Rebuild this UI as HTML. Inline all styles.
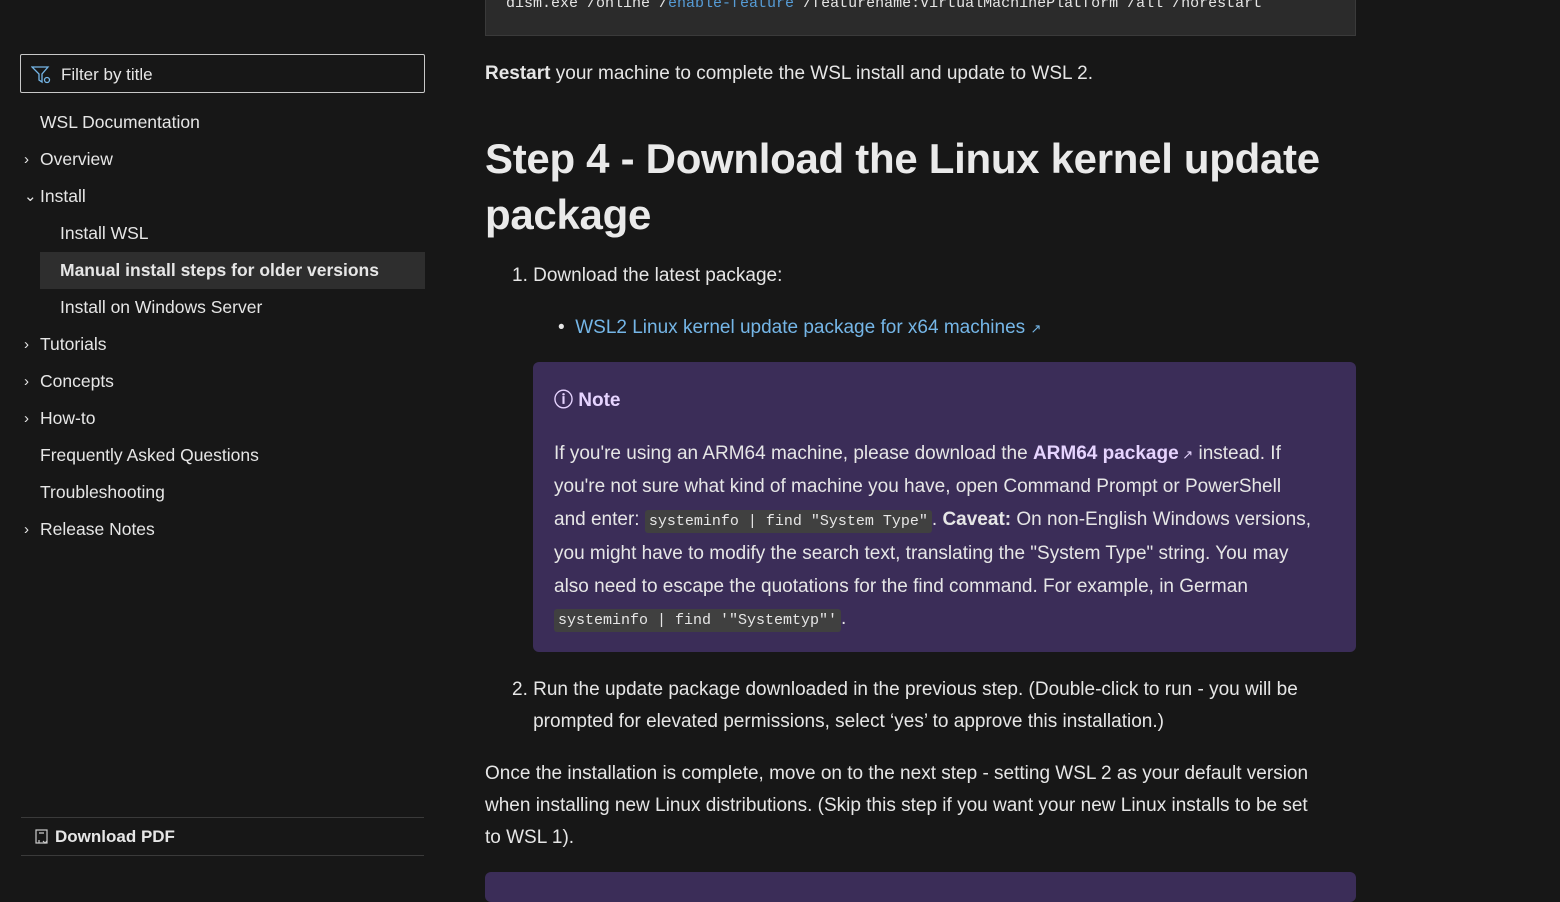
<!DOCTYPE html>
<html><head><meta charset="utf-8"><style>
*{box-sizing:border-box;margin:0;padding:0}
body{width:1560px;height:884px;overflow:hidden;background:#171717;color:#e6e6e6;font-family:"Liberation Sans",sans-serif;position:relative}
.filter{position:absolute;left:20px;top:54px;width:405px;height:39px;border:1px solid #c8c8c8;border-radius:2px;font-size:17px;color:#e6e6e6;padding:10px 0 0 40px}
.filter svg{position:absolute;left:10px;top:10px}
.nav{position:absolute;left:20px;top:104px;width:405px;font-size:17.5px}
.nav div{height:37px;line-height:37px;padding-left:20px;position:relative;white-space:nowrap}
.nav div.sub{padding-left:40px}
.nav div.act{background:#2e2e2e;font-weight:bold;margin-left:20px;padding-left:20px}
.nav .chev{position:absolute;left:4px;top:0;font-size:15px}
.pdf{position:absolute;left:21px;top:817px;width:403px;height:39px;border-top:1px solid #3a3a3a;border-bottom:1px solid #3a3a3a;font-size:17px;font-weight:bold;padding:9px 0 0 34px}
.code{position:absolute;left:485px;top:-18px;width:871px;height:54px;background:#2b2b2b;border:1px solid #3a3a3a;font-family:"Liberation Mono",monospace;font-size:15px;color:#e6e6e6;padding:12px 20px}
.p{position:absolute;left:485px;font-size:19px;line-height:32px;white-space:nowrap}
h1{position:absolute;left:485px;top:131px;font-size:42px;line-height:56px;font-weight:bold;color:#eaeaea;letter-spacing:-0.3px}
a{color:#75b6e7;text-decoration:none}
.note{position:absolute;left:533px;top:362px;width:823px;height:290px;background:#3b2d58;border-radius:6px;padding:23px 21px;font-size:19px;line-height:32.5px;white-space:nowrap}
code{font-family:"Liberation Mono",monospace;font-size:15px;background:#404040;padding:3px 4px;border-radius:3px}
.note b.lk{color:#e6d4ff}
</style></head><body>
<div class="code">dism.exe /online /<span style="color:#569cd6">enable-feature</span> /featurename:VirtualMachinePlatform /all /norestart</div>
<div class="filter"><svg width="22" height="20" viewBox="0 0 22 20" fill="none" stroke="#75b6e7" stroke-width="1.3"><path d="M1 2h16l-6 7v8l-3-2v-6z"/><circle cx="16" cy="15" r="2.5"/></svg>Filter by title</div>
<div class="nav">
<div>WSL Documentation</div>
<div><span class="chev">›</span>Overview</div>
<div><span class="chev">⌄</span>Install</div>
<div class="sub">Install WSL</div>
<div class="act">Manual install steps for older versions</div>
<div class="sub">Install on Windows Server</div>
<div><span class="chev">›</span>Tutorials</div>
<div><span class="chev">›</span>Concepts</div>
<div><span class="chev">›</span>How-to</div>
<div>Frequently Asked Questions</div>
<div>Troubleshooting</div>
<div><span class="chev">›</span>Release Notes</div>
</div>
<div class="pdf"><svg style="position:absolute;left:14px;top:11px" width="14" height="16" viewBox="0 0 14 16" fill="none" stroke="#ccc" stroke-width="1.2"><rect x="1" y="1" width="11" height="13"/><path d="M4 4h5M4 11v3M8 12l2 2 2-2"/></svg>Download PDF</div>
<div class="p" style="top:58px"><b>Restart</b> your machine to complete the WSL install and update to WSL 2.</div>
<h1>Step 4 - Download the Linux kernel update<br>package</h1>
<div class="p" style="top:260px;left:512px">1. Download the latest package:</div>
<div class="p" style="top:312px;left:558px">•&nbsp;&nbsp;<a>WSL2 Linux kernel update package for x64 machines <span style="font-size:13px">↗</span></a></div>
<div class="note">
<div style="font-weight:bold;color:#e6d4ff;margin-bottom:20px">ⓘ Note</div>
<div>If you're using an ARM64 machine, please download the <b class="lk">ARM64 package</b><span style="font-size:13px;color:#e6d4ff"> ↗</span> instead. If<br>you're not sure what kind of machine you have, open Command Prompt or PowerShell<br>and enter: <code>systeminfo | find "System Type"</code>. <b>Caveat:</b> On non-English Windows versions,<br>you might have to modify the search text, translating the "System Type" string. You may<br>also need to escape the quotations for the find command. For example, in German<br><code>systeminfo | find '"Systemtyp"'</code>.</div>
</div>
<div class="p" style="top:674px;left:512px">2. Run the update package downloaded in the previous step. (Double-click to run - you will be<br>&nbsp;&nbsp;&nbsp;&nbsp;prompted for elevated permissions, select ‘yes’ to approve this installation.)</div>
<div class="p" style="top:758px">Once the installation is complete, move on to the next step - setting WSL 2 as your default version<br>when installing new Linux distributions. (Skip this step if you want your new Linux installs to be set<br>to WSL 1).</div>
<div style="position:absolute;left:485px;top:872px;width:871px;height:30px;background:#3b2d58;border-radius:6px"></div>
</body></html>
